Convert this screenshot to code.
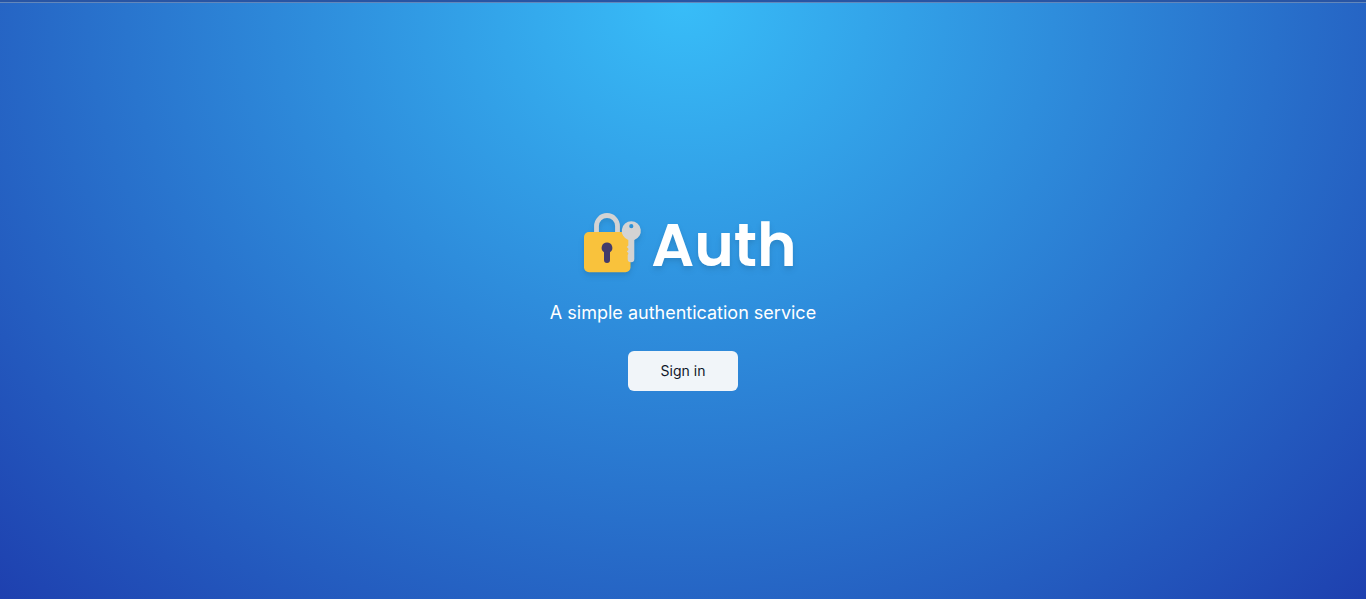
<div class="page">
  <header></header>
  <main>
    <h1>
      <svg width="74" height="64" viewBox="568 211 74 64" aria-hidden="true">
        <path d="M595.500 234V226a10.500 10.500 0 0 1 21 0V234" fill="none" stroke="#d3d3d3" stroke-width="4.800" />
        <rect x="583" y="232" width="46.500" height="40.300" rx="5" fill="#f9c23c" />
        <path d="M606 242.500a5.300 5.300 0 0 0-3 9.700v7.800a3 3 0 0 0 6 0v-7.800a5.300 5.300 0 0 0-3-9.700z" fill="#433b6b" />
        <path fill-rule="evenodd" d="M630.300 221.300a9.600 9.600 0 0 0-3 18.700v5.500l-1.500 1.500 1.500 1.500v1.500l-1.500 1.500 1.500 1.500v1l-.6 1v4a3.200 3.200 0 0 0 6.600 0V240a9.600 9.600 0 0 0-3-18.700zm0 2.800a2.100 2.100 0 1 1 0 4.200 2.100 2.100 0 0 1 0-4.200z" fill="#d3d3d3" />
      </svg>
      <span>Auth</span>
    </h1>
    <p>A simple authentication service</p>
    <button type="button">Sign in</button>
  </main>
</div>

<style>
  :global(body) { margin: 0; }
  .page { min-height: 100vh; display: flex; flex-direction: column; font-family: Inter, sans-serif; color: #fff; }
  header { height: 2px; background: #2855a4; border-bottom: 1px solid #6387bb; }
  main {
    flex: 1;
    display: flex;
    flex-direction: column;
    align-items: center;
    justify-content: center;
    gap: 24px;
    background: radial-gradient(ellipse at top, #38bdf8, #1e40af);
  }
  h1 { margin: 0; height: 64px; display: flex; align-items: center; gap: 8px; font: 600 60px/64px Poppins, Inter, sans-serif; filter: drop-shadow(0 4px 3px #00000012) drop-shadow(0 2px 2px #0000000f); }
  span { padding-top: 4px; }
  p { margin: 0; font-size: 18px; line-height: 28px; }
  button { height: 40px; min-width: 110px; padding: 0 32px; border: 0; border-radius: 6px; background: #f1f5f9; color: #0f172a; font: 400 14px/20px Inter, sans-serif; }
</style>
